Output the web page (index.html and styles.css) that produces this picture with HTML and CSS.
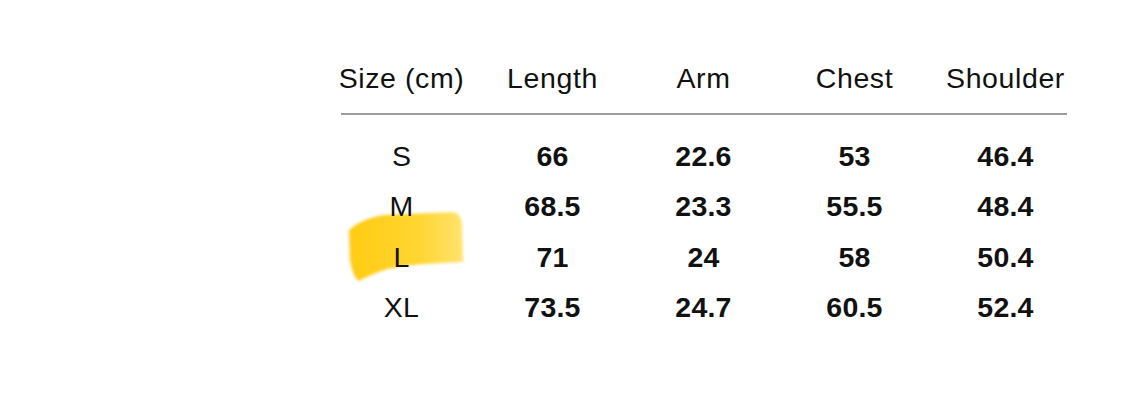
FILE: index.html
```html
<!DOCTYPE html>
<html lang="en">
<head>
<meta charset="utf-8">
<title>Size chart</title>
<link rel="stylesheet" href="styles.css">
</head>
<body>
<div class="chart">
  <svg class="marker" width="150" height="100" viewBox="0 0 150 100" aria-hidden="true">
    <defs>
      <linearGradient id="hl" x1="0" y1="0" x2="1" y2="0">
        <stop offset="0" stop-color="#FFCB12"/>
        <stop offset="0.6" stop-color="#FFD530"/>
        <stop offset="1" stop-color="#FFE36E"/>
      </linearGradient>
      <filter id="soft" x="-10%" y="-10%" width="120%" height="120%">
        <feGaussianBlur stdDeviation="1.4"/>
      </filter>
    </defs>
    <path d="M13 30 C 22 22, 34 17, 48 15 L 117 12 C 123 13, 126 18, 126 26 L 127 62 C 105 63, 80 64, 62 67 C 48 69, 36 74, 23 81 C 18 78, 16 70, 14 60 Z" fill="url(#hl)" filter="url(#soft)"/>
  </svg>
  <div class="row head">
    <div class="cell">Size (cm)</div>
    <div class="cell">Length</div>
    <div class="cell">Arm</div>
    <div class="cell">Chest</div>
    <div class="cell">Shoulder</div>
  </div>
  <div class="rule"></div>
  <div class="row data">
    <div class="cell size">S</div>
    <div class="cell">66</div>
    <div class="cell">22.6</div>
    <div class="cell">53</div>
    <div class="cell">46.4</div>
  </div>
  <div class="row data">
    <div class="cell size">M</div>
    <div class="cell">68.5</div>
    <div class="cell">23.3</div>
    <div class="cell">55.5</div>
    <div class="cell">48.4</div>
  </div>
  <div class="row data">
    <div class="cell size">L</div>
    <div class="cell">71</div>
    <div class="cell">24</div>
    <div class="cell">58</div>
    <div class="cell">50.4</div>
  </div>
  <div class="row data">
    <div class="cell size">XL</div>
    <div class="cell">73.5</div>
    <div class="cell">24.7</div>
    <div class="cell">60.5</div>
    <div class="cell">52.4</div>
  </div>
</div>
</body>
</html>
```
FILE: styles.css
```css
html, body {
  margin: 0;
  padding: 0;
  background: #ffffff;
}
body {
  font-family: "Liberation Sans", Arial, Helvetica, sans-serif;
  color: #111111;
  width: 1125px;
  height: 409px;
  overflow: hidden;
}
.chart {
  position: relative;
  width: 755px;
  margin-left: 326px;
  padding-top: 58px;
}
.marker {
  position: absolute;
  left: 10px;
  top: 200px;
  z-index: 0;
}
.row {
  position: relative;
  z-index: 1;
  display: grid;
  grid-template-columns: repeat(5, 151px);
}
.cell {
  text-align: center;
}
.head .cell {
  font-size: 28.5px;
  line-height: 40px;
  letter-spacing: 0.6px;
}
.rule {
  height: 2px;
  background: #9c9c9c;
  margin: 15px 14px 16px 15px;
}
.data .cell {
  font-size: 28.5px;
  line-height: 50.3px;
  font-weight: bold;
  letter-spacing: 0.2px;
}
.data .cell.size {
  font-weight: normal;
}
```
